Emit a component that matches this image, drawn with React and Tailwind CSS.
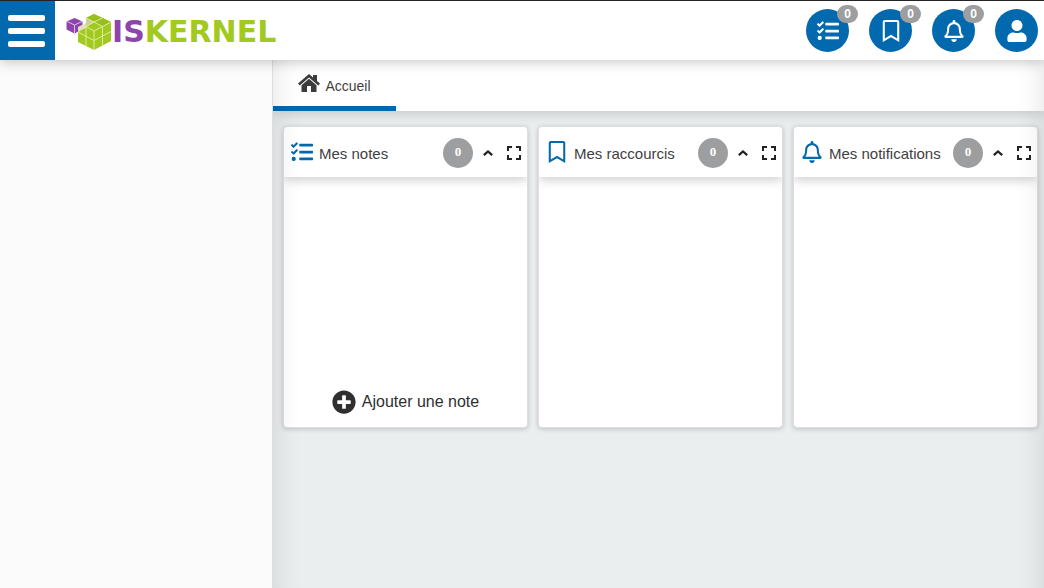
import { FaTasks, FaRegBookmark, FaRegBell, FaUser, FaPlusCircle } from 'react-icons/fa'
import { MdFullscreen } from 'react-icons/md'

const shortcuts = [
    { id: 'notes', label: 'Mes notes', icon: FaTasks, count: 0 },
    { id: 'bookmarks', label: 'Mes raccourcis', icon: FaRegBookmark, count: 0 },
    { id: 'alerts', label: 'Mes notifications', icon: FaRegBell, count: 0 },
    { id: 'user', label: 'Mon compte', icon: FaUser },
]

const panels = [
    { id: 'notes', title: 'Mes notes', icon: FaTasks, count: 0, action: 'Ajouter une note' },
    { id: 'bookmarks', title: 'Mes raccourcis', icon: FaRegBookmark, count: 0 },
    { id: 'alerts', title: 'Mes notifications', icon: FaRegBell, count: 0 },
]

function Cubes() {
    return (
        <svg viewBox="0 0 46 38" className="w-[46px] h-[38px]" aria-hidden="true">
            {/* small purple cube */}
            <path d="M8.500 5L16.500 8.500V16.500L8.500 20.500L0.500 16.500V8.500Z" fill="#8e44ad" />
            <path d="M1 8.500L8.500 12L16 8.500M8.500 12V20" fill="none" stroke="#d9bfe6" strokeWidth="1" />
            {/* green block, top left cube taken out */}
            <path d="M28 1L45 9V28L28 37L12 29V19L20 14.500V5Z" fill="#a2c920" />
            <path d="M20 5L28 9L20 14Z" fill="#cfcf9c" />
            <path d="M12 19L20 14.500V10L12 14Z" fill="#dfe2bd" />
            <path d="M28 1L36.500 5L28 9L20 5ZM36.500 5L45 9L36.500 13.500L28 9Z" fill="#98bf1b" />
            <path
                d="M20 5L28 9L36.500 5M28 9L20 13.500L28 18L45 9M28 9L36.500 13.500V32.500M28 18V37M12 19L28 27.500L45 18.500M20 13.500V33"
                fill="none"
                stroke="#dcee9c"
                strokeWidth="1"
            />
        </svg>
    )
}

function HomeIcon() {
    return (
        <svg viewBox="0 0 22 18" className="w-[22px] h-[18px]" fill="#3c3c3c" aria-hidden="true">
            <path d="M11 0L15 3.400V1H19V6.900L22 9.500L20.300 11.500L11 3.400L1.700 11.500L0 9.500Z" />
            <path d="M11 4.800L18.500 11.300V18H13V12H9V18H3.500V11.300Z" />
        </svg>
    )
}

function Panel({ panel }) {
    const Icon = panel.icon

    return (
        <section className="flex flex-col h-[302px] overflow-hidden bg-white rounded-sm border border-[#dcdfe0] shadow-[0_1px_5px_rgba(0,0,0,0.2)]">
            <header className="flex items-center h-[50px] shrink-0 pt-0.5 pl-1.5 pr-px shadow-[0_3px_10px_rgba(0,0,0,0.2)]">
                <Icon className="w-6 h-[22px] mb-0.5 text-[#0369ae]" />
                <h2 className="flex-1 pl-[5px] pt-0.5 text-[15px] leading-5 text-[#3f3f3f] whitespace-nowrap">{panel.title}</h2>
                <span className="flex justify-center size-[30px] rounded-full bg-[#9d9ea0] text-white text-[13px] leading-7 font-bold font-['Liberation_Serif',serif]">
                    {panel.count}
                </span>
                <button type="button" aria-label="Réduire" className="flex justify-center w-[29px]">
                    <svg viewBox="0 0 10 6" className="w-2.5 h-1.5" fill="none" stroke="#222" strokeWidth="2.2" aria-hidden="true">
                        <path d="M0.800 5.200L5 1.500L9.200 5.200" />
                    </svg>
                </button>
                <button type="button" aria-label="Plein écran">
                    <MdFullscreen className="size-6 text-[#222]" />
                </button>
            </header>
            {panel.action && (
                <button type="button" className="flex items-center justify-center gap-1.5 mt-auto h-[50px] text-base text-[#2f2f2f]">
                    <FaPlusCircle className="size-6" /> {panel.action}
                </button>
            )}
        </section>
    )
}

export default function App() {
    return (
        <div className="flex flex-col min-h-screen bg-white font-['Liberation_Sans',Arial,sans-serif]">
            {/* Top bar */}
            <header className="relative z-10 flex items-center h-[60px] border-t border-[#232323] bg-white shadow-[0_2px_12px_rgba(0,0,0,0.22)]">
                <button type="button" aria-label="Menu" className="flex flex-col items-center justify-center gap-[7px] w-[55px] h-full pr-0.5 bg-[#0369ae]">
                    <span className="w-[37px] h-1.5 rounded-xs bg-white"></span>
                    <span className="w-[37px] h-1.5 rounded-xs bg-white"></span>
                    <span className="w-[37px] h-1.5 rounded-xs bg-white"></span>
                </button>
                <a href="#" className="flex items-center ml-[11px] pt-0.5 font-['DejaVu_Sans',sans-serif] text-[30px] leading-9 font-bold text-[#a2c920]">
                    <Cubes />
                    <span><span className="text-[#8e44ad]">IS</span>KERNEL</span>
                </a>
                <nav className="flex gap-5 ml-auto pr-1.5">
                    {shortcuts.map(({ id, label, icon: Icon, count }) => (
                        <button key={id} type="button" aria-label={label} className="relative flex items-center justify-center size-[43px] rounded-full bg-[#0369ae] text-white">
                            <Icon className="size-[22px]" />
                            {count !== undefined && (
                                <span className="absolute -top-1 -right-[9px] w-[21px] h-[18px] rounded-full bg-[#9d9ea0] text-xs leading-[18px] font-bold">
                                    {count}
                                </span>
                            )}
                        </button>
                    ))}
                </nav>
            </header>

            <div className="flex flex-1">
                <aside className="w-[273px] shrink-0 border-r border-[#dedede] bg-[#fbfbfb]"></aside>

                <main className="relative flex-1 min-w-0 overflow-hidden bg-[#eaeeef]">
                    <nav className="flex h-[51px] bg-white shadow-[0_1px_14px_rgba(0,0,0,0.2)]">
                        <a href="#" className="flex items-center justify-center gap-[5px] w-[123px] border-b-5 border-[#0369ae] text-sm text-[#3f3f3f]">
                            <HomeIcon />
                            <span className="pt-1.5">Accueil</span>
                        </a>
                    </nav>
                    <div className="grid grid-cols-3 gap-2.5 pt-[15px] pl-2.5 pr-1.5">
                        {panels.map((panel) => (
                            <Panel key={panel.id} panel={panel} />
                        ))}
                    </div>
                    {/* soft shade along both sides of the workspace */}
                    <div className="absolute inset-0 pointer-events-none shadow-[inset_30px_0_30px_-30px_rgba(0,0,0,0.12),inset_-30px_0_30px_-30px_rgba(0,0,0,0.12)]"></div>
                </main>
            </div>
        </div>
    )
}
